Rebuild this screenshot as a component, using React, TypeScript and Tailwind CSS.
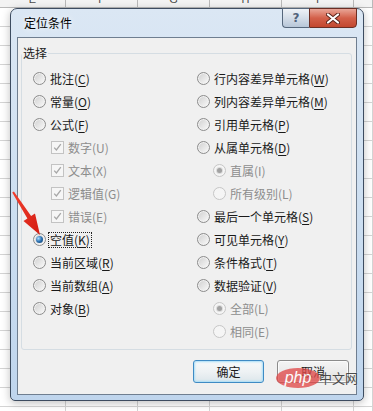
import React from "react";

const cjk = "font-['Microsoft_YaHei','Noto_Sans_CJK_SC',sans-serif]";

type Item = {
  label: string;
  key: string;
  kind?: "radio" | "check";
  disabled?: boolean;
  checked?: boolean;
  indent?: boolean;
  focus?: boolean;
};

const leftItems: Item[] = [
  { label: "批注", key: "C" },
  { label: "常量", key: "O" },
  { label: "公式", key: "F" },
  { label: "数字", key: "U", kind: "check", disabled: true, checked: true, indent: true },
  { label: "文本", key: "X", kind: "check", disabled: true, checked: true, indent: true },
  { label: "逻辑值", key: "G", kind: "check", disabled: true, checked: true, indent: true },
  { label: "错误", key: "E", kind: "check", disabled: true, checked: true, indent: true },
  { label: "空值", key: "K", checked: true, focus: true },
  { label: "当前区域", key: "R" },
  { label: "当前数组", key: "A" },
  { label: "对象", key: "B" },
];

const rightItems: Item[] = [
  { label: "行内容差异单元格", key: "W" },
  { label: "列内容差异单元格", key: "M" },
  { label: "引用单元格", key: "P" },
  { label: "从属单元格", key: "D" },
  { label: "直属", key: "I", disabled: true, checked: true, indent: true },
  { label: "所有级别", key: "L", disabled: true, indent: true },
  { label: "最后一个单元格", key: "S" },
  { label: "可见单元格", key: "Y" },
  { label: "条件格式", key: "T" },
  { label: "数据验证", key: "V" },
  { label: "全部", key: "L", disabled: true, checked: true, indent: true },
  { label: "相同", key: "E", disabled: true, indent: true },
];

const colClasses = ["w-[66px]", "w-[72px]", "w-[72px]", "w-[72px]", "w-[72px]", "w-[19px]"];
const colLetters = ["E", "F", "G", "H", "I", ""];

const Sheet = () => (
  <div className="flex flex-col">
    <div className="flex h-[8px] border-b border-[#b9b9b9] bg-[#f3f3f3]">
      {colClasses.map((c, i) => (
        <div
          key={i}
          className={`${c} flex shrink-0 items-end justify-center overflow-hidden border-r border-[#b9b9b9] font-['Liberation_Sans',sans-serif] text-[11px] leading-[11px] text-[#4a4a4a]`}
        >
          <span className="pb-[2px]">{colLetters[i]}</span>
        </div>
      ))}
    </div>
    {Array.from({ length: 22 }).map((_, r) => (
      <div key={r} className="flex h-[19px] border-b border-[#d4d4d4]">
        {colClasses.map((c, i) => (
          <div key={i} className={`${c} shrink-0 border-r border-[#d4d4d4]`} />
        ))}
      </div>
    ))}
  </div>
);

const Radio = ({ checked, disabled }: { checked?: boolean; disabled?: boolean }) => (
  <span
    className={
      disabled
        ? "flex h-[13px] w-[13px] shrink-0 items-center justify-center rounded-full border border-[#c6c6c6] bg-[#f5f5f5]"
        : "flex h-[13px] w-[13px] shrink-0 items-center justify-center rounded-full border border-[#8c8c8c] bg-linear-to-br from-[#cfcfcf] to-[#fbfbfb] shadow-[inset_0_0_0_1px_#f2f2f2]"
    }
  >
    {checked &&
      (disabled ? (
        <span className="h-[5px] w-[5px] rounded-full bg-[#a2a2a2] shadow-[0_0_0_1px_#dcdcdc]" />
      ) : (
        <span className="h-[7px] w-[7px] rounded-full bg-radial-[at_35%_35%] from-[#a9dcff] via-[#2b70b0] to-[#0e3763]" />
      ))}
  </span>
);

const Check = () => (
  <span className="flex h-[13px] w-[13px] shrink-0 items-center justify-center border border-[#c3c3c3] bg-[#f6f6f6]">
    <svg width="9" height="9" viewBox="0 0 9 9">
      <path d="M1.2 4.6 L3.4 7 L7.8 1.2" stroke="#a7a7a7" strokeWidth="1.3" fill="none" />
    </svg>
  </span>
);

const Row = ({ item, sub }: { item: Item; sub: string }) => {
  const text = (
    <>
      {item.label}(
      {item.disabled ? item.key : <span className="underline underline-offset-2">{item.key}</span>})
    </>
  );
  return (
    <div className={`flex h-[23px] items-center gap-[4px] ${item.indent ? sub : ""}`}>
      {item.kind === "check" ? <Check /> : <Radio checked={item.checked} disabled={item.disabled} />}
      {item.focus ? (
        <span className="-ml-[2px] border border-dotted border-[#222] px-[1px] leading-[14px] text-[#1a1a1a]">
          {text}
        </span>
      ) : (
        <span className={item.disabled ? "leading-[16px] text-[#8d8d8d]" : "leading-[16px] text-[#1a1a1a]"}>
          {text}
        </span>
      )}
    </div>
  );
};

const Dialog = () => (
  <div className="absolute left-[10px] top-[8px] flex h-[393px] w-[354px] flex-col rounded-t-[7px] rounded-b-[5px] border border-[#3d4c60] bg-linear-to-b from-[#dbe7f4] via-[#cddff1] to-[#bfd5ed] px-[6px] pb-[5px] shadow-[0_2px_8px_rgba(0,0,0,0.25)]">
    <div className={`flex h-[28px] shrink-0 items-center pl-[7px] text-[12px] text-black ${cjk} [text-shadow:0_0_6px_#fff]`}>
      定位条件
    </div>
    <div className="absolute right-[6px] top-[-1px] flex h-[20px]">
      <div className="flex w-[27px] items-center justify-center rounded-bl-[4px] border border-r-0 border-[#56677c] bg-linear-to-b from-[#eef2f7] via-[#d4dde8] to-[#b7c6d8] font-['DejaVu_Sans',sans-serif] text-[12px] font-bold text-[#51627a]">
        ?
      </div>
      <div className="flex w-[48px] items-center justify-center rounded-br-[4px] border border-[#6b2e24] bg-linear-to-b from-[#e8a597] via-[#d3604a] to-[#c2472f]">
        <svg width="14" height="11" viewBox="0 0 14 11">
          <path d="M2 1.5 L12 9.5 M12 1.5 L2 9.5" stroke="#5a2219" strokeWidth="4" strokeLinecap="round" />
          <path d="M2 1.5 L12 9.5 M12 1.5 L2 9.5" stroke="#ffffff" strokeWidth="2.2" strokeLinecap="round" />
        </svg>
      </div>
    </div>
    <div className={`flex flex-1 flex-col border border-[#6f7e90] bg-[#f0f0f0] text-[12px] ${cjk}`}>
      <fieldset className="ml-[3px] mr-[4px] mt-[8px] rounded-[3px] border border-[#d5dde3]">
        <legend className="px-[1px] leading-[14px] text-[#1a1a1a]">选择</legend>
        <div className="flex pb-[6px] pl-[11px] pt-[7px]">
          <div className="flex w-[164px] flex-col">
            {leftItems.map((it, i) => (
              <Row key={i} item={it} sub="ml-[18px]" />
            ))}
          </div>
          <div className="flex flex-col">
            {rightItems.map((it, i) => (
              <Row key={i} item={it} sub="ml-[16px]" />
            ))}
          </div>
        </div>
      </fieldset>
      <div className="mt-[10px] flex justify-end gap-[13px] pr-[7px]">
        <button className="flex h-[23px] w-[71px] items-center justify-center rounded-[3px] border border-[#3f8bc4] bg-linear-to-b from-[#f7f9fa] via-[#eef2f4] to-[#dde6eb] text-[#1a1a1a] shadow-[inset_0_0_2px_1px_#a9def7]">
          确定
        </button>
        <button className="flex h-[23px] w-[72px] items-center justify-center rounded-[3px] border border-[#8b8b8b] bg-linear-to-b from-[#f4f4f4] via-[#ebebeb] to-[#d9d9d9] text-[#1a1a1a] shadow-[inset_0_0_0_1px_#fbfbfb]">
          取消
        </button>
      </div>
    </div>
  </div>
);

const Watermark = () => (
  <div className="pointer-events-none absolute left-[276px] top-[368px] flex items-center opacity-90">
    <div className="flex h-[20px] w-[44px] items-center justify-center rounded-[50%] bg-[#e04848]/85">
      <span className="font-['Liberation_Sans',sans-serif] text-[16px] italic leading-[16px] text-white">php</span>
    </div>
    <span className={`-ml-[1px] text-[13px] leading-[14px] text-[#3a3a3a] ${cjk} [text-shadow:0_0_2px_#fff]`}>
      中文网
    </span>
  </div>
);

const Arrow = () => (
  <svg className="pointer-events-none absolute left-0 top-0" width="373" height="411" viewBox="0 0 373 411">
    <defs>
      <linearGradient id="ar" x1="0" y1="0" x2="1" y2="1">
        <stop offset="0" stopColor="#f2402f" />
        <stop offset="1" stopColor="#d31c12" />
      </linearGradient>
    </defs>
    <polygon
      points="12.2,192.6 13.9,191.4 31.1,216 35,213.4 40,235 23.5,221 27.4,218.6"
      fill="url(#ar)"
    />
  </svg>
);

export default function App() {
  return (
    <div className="relative h-[411px] w-[373px] overflow-hidden bg-white">
      <Sheet />
      <Dialog />
      <Watermark />
      <Arrow />
    </div>
  );
}
